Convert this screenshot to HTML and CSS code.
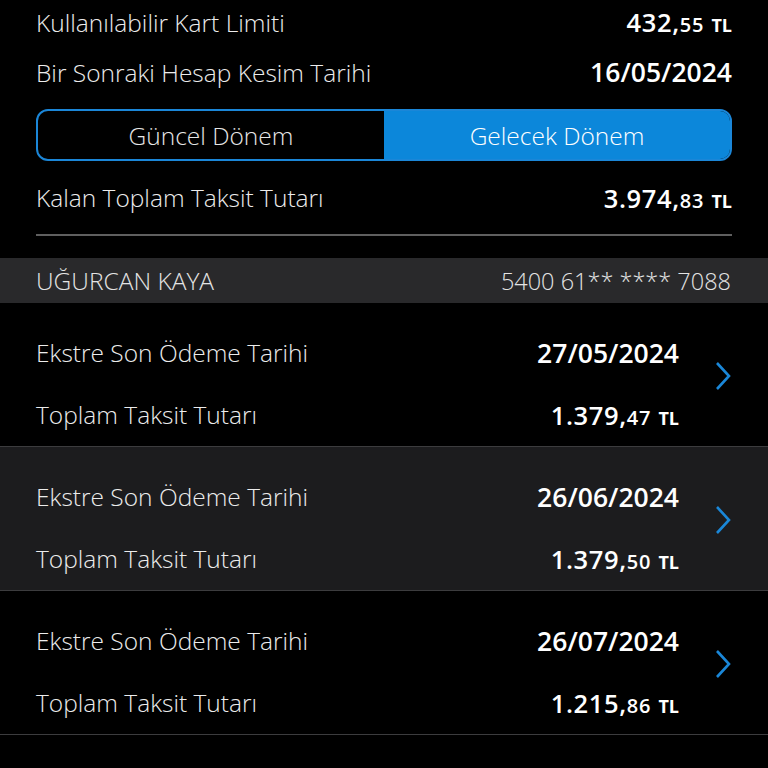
FILE: index.html
```html
<!DOCTYPE html>
<html lang="tr">
<head>
<meta charset="utf-8">
<link rel="stylesheet" href="styles.css">
</head>
<body>
<div class="top">
  <div class="row r1"><span class="label">Kullanılabilir Kart Limiti</span><span class="val amt">432,<small>55</small> <em>TL</em></span></div>
  <div class="row r2"><span class="label">Bir Sonraki Hesap Kesim Tarihi</span><span class="val">16/05/2024</span></div>
  <div class="toggle"><div class="tab">Güncel Dönem</div><div class="tab active">Gelecek Dönem</div></div>
  <div class="row r3"><span class="label">Kalan Toplam Taksit Tutarı</span><span class="val amt">3.974,<small>83</small> <em>TL</em></span></div>
  <div class="divider"></div>
</div>
<div class="namebar"><span class="name">UĞURCAN KAYA</span><span class="card">5400 61** **** 7088</span></div>
<div class="block">
  <div class="lines">
    <div class="line"><span class="label">Ekstre Son Ödeme Tarihi</span><span class="val">27/05/2024</span></div>
    <div class="line"><span class="label">Toplam Taksit Tutarı</span><span class="val amt">1.379,<small>47</small> <em>TL</em></span></div>
  </div>
  <svg class="chev" viewBox="0 0 18 30"><path d="M3 2 L15 15 L3 28" fill="none" stroke="#1a87d8" stroke-width="2.6"/></svg>
</div>
<div class="block alt">
  <div class="lines">
    <div class="line"><span class="label">Ekstre Son Ödeme Tarihi</span><span class="val">26/06/2024</span></div>
    <div class="line"><span class="label">Toplam Taksit Tutarı</span><span class="val amt">1.379,<small>50</small> <em>TL</em></span></div>
  </div>
  <svg class="chev" viewBox="0 0 18 30"><path d="M3 2 L15 15 L3 28" fill="none" stroke="#1a87d8" stroke-width="2.6"/></svg>
</div>
<div class="block">
  <div class="lines">
    <div class="line"><span class="label">Ekstre Son Ödeme Tarihi</span><span class="val">26/07/2024</span></div>
    <div class="line"><span class="label">Toplam Taksit Tutarı</span><span class="val amt">1.215,<small>86</small> <em>TL</em></span></div>
  </div>
  <svg class="chev" viewBox="0 0 18 30"><path d="M3 2 L15 15 L3 28" fill="none" stroke="#1a87d8" stroke-width="2.6"/></svg>
</div>
</body>
</html>
```
FILE: styles.css
```css
html, body {
  margin: 0;
  padding: 0;
  background: #000;
  color: #fff;
  font-family: "Open Sans", "Noto Sans", sans-serif;
  overflow: hidden;
}
.top {
  padding: 0 36px;
}
.row {
  display: flex;
  justify-content: space-between;
  align-items: center;
}
.r1 { height: 44px; }
.r2 { height: 56px; }
.r3 { height: 73px; }
.label {
  font-weight: 300;
  font-size: 24.5px;
  color: #ececec;
  white-space: nowrap;
}
.val {
  font-weight: 600;
  font-size: 26.5px;
  color: #fff;
  white-space: nowrap;
}
.val.amt {
  font-size: 25.5px;
  letter-spacing: 0.6px;
}
.val small {
  font-size: 20px;
  font-weight: 600;
  letter-spacing: 0.8px;
}
.val em {
  font-style: normal;
  font-size: 18px;
  font-weight: 700;
  letter-spacing: 0;
}
.toggle {
  margin-top: 9px;
  height: 52px;
  display: flex;
  border: 2px solid #1b86d7;
  border-radius: 12px;
  overflow: hidden;
  box-sizing: border-box;
}
.tab {
  flex: 1;
  display: flex;
  align-items: center;
  justify-content: center;
  font-weight: 300;
  font-size: 24.5px;
  color: #e6e6e6;
}
.tab.active {
  background: #0c87da;
  color: #fff;
}
.divider {
  height: 2px;
  background: #5f5f5f;
}
.namebar {
  margin-top: 22px;
  height: 45px;
  background: #29292b;
  display: flex;
  justify-content: space-between;
  align-items: center;
  padding: 0 37px 0 36px;
  font-weight: 300;
  color: #e4e4e4;
}
.name { font-size: 24.5px; }
.card { font-size: 23.5px; }
.block {
  height: 144px;
  box-sizing: border-box;
  padding: 19px 36px 1px 36px;
  display: flex;
  align-items: center;
  border-bottom: 1px solid #3c3c3e;
}
.block.alt {
  background: #1c1c1e;
}
.lines {
  flex: 1;
  display: flex;
  flex-direction: column;
}
.line {
  height: 62px;
  display: flex;
  justify-content: space-between;
  align-items: center;
}
.chev {
  width: 18px;
  height: 30px;
  margin-left: 35px;
  margin-bottom: 16px;
}
```
